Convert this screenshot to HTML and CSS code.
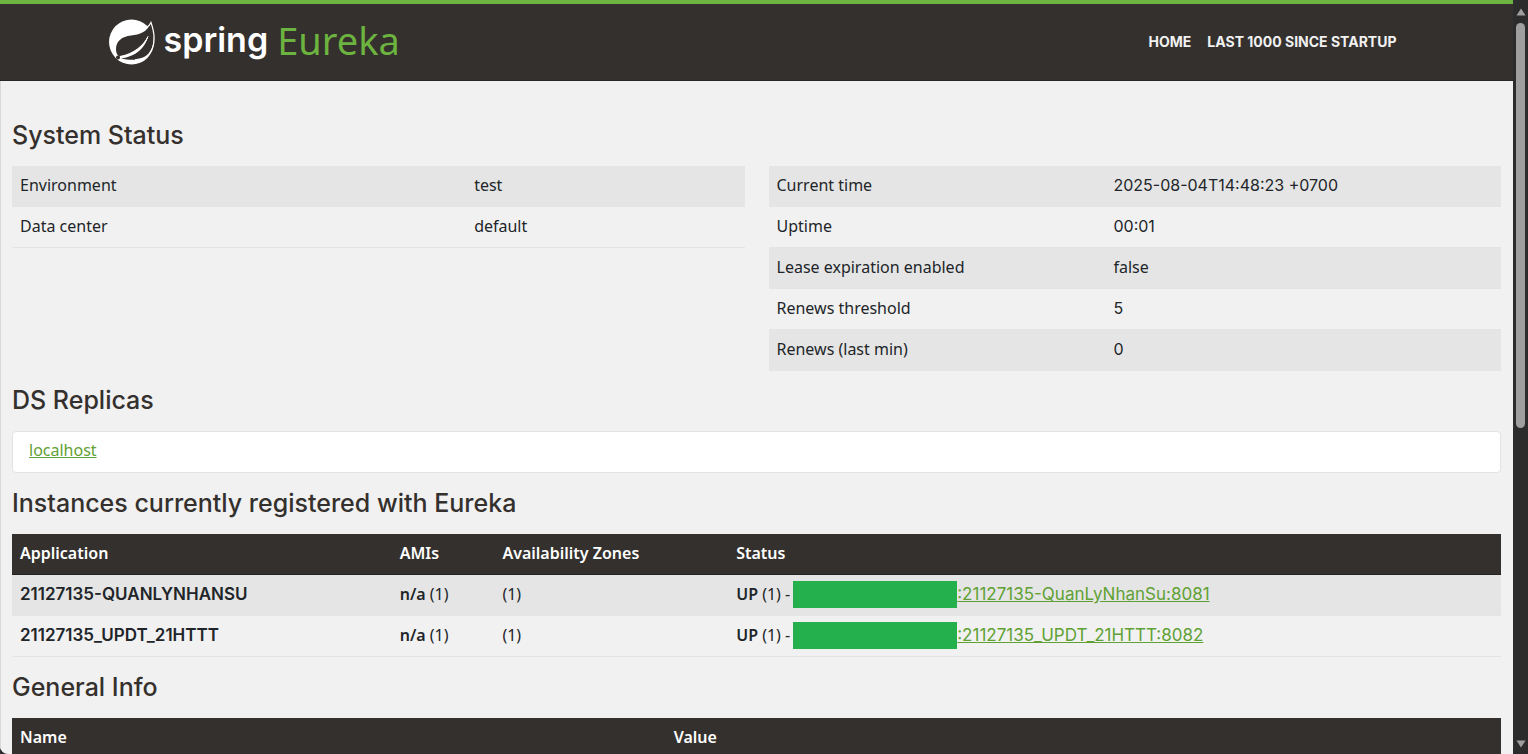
FILE: index.html
```html
<!DOCTYPE html>
<html lang="en">
<head>
<meta charset="utf-8">
<title>Eureka</title>
<link rel="stylesheet" href="styles.css">
</head>
<body>
<div class="page">
  <header class="navbar">
    <div class="container">
      <a class="brand" href="#" aria-label="Spring Eureka">
        <svg class="brand-icon" viewBox="0 0 46 46" aria-hidden="true">
          <circle cx="22.500" cy="23" r="22.500" fill="#fff"/>
          <path d="M42 4C38 13 31 15.500 22 16.500C13 17.500 7 22 7 30C7 34 8 35.500 10 37.500C20 37 33 31 39 17.500C36 29 27 37.500 12 39.500C22 41.500 34 42 40 35C46 27 45.500 15 42 4Z" fill="#34302d"/>
          <path d="M36 10C39 8 41 6 42 3.500C46 15 46.500 27 40 35C37 38.500 32 40.500 26 40.800" fill="none" stroke="#fff" stroke-width="1.200"/>
          <path d="M11 38.500C24 37 34 30 39 17.500C35 26 25 35 11 37.500Z" fill="#fff" stroke="#fff" stroke-width="1"/>
          <circle cx="9" cy="38.500" r="2" fill="#34302d"/>
        </svg>
        <span class="brand-spring">spring</span>
        <span class="brand-eureka">Eureka</span>
      </a>
      <nav class="links">
        <a href="#">HOME</a>
        <a href="#">LAST 1000 SINCE STARTUP</a>
      </nav>
    </div>
  </header>
  <main class="content">
    <h1>System Status</h1>
    <div class="status">
      <table class="left">
        <tbody>
          <tr><td>Environment</td><td>test</td></tr>
          <tr><td>Data center</td><td>default</td></tr>
        </tbody>
      </table>
      <table class="right">
        <tbody>
          <tr><td>Current time</td><td class="data">2025-08-04T14:48:23 +0700</td></tr>
          <tr><td>Uptime</td><td class="data">00:01</td></tr>
          <tr><td>Lease expiration enabled</td><td>false</td></tr>
          <tr><td>Renews threshold</td><td class="data">5</td></tr>
          <tr><td>Renews (last min)</td><td class="data">0</td></tr>
        </tbody>
      </table>
    </div>
    <h1>DS Replicas</h1>
    <ul class="replicas">
      <li><a href="#">localhost</a></li>
    </ul>
    <h1>Instances currently registered with Eureka</h1>
    <table class="instances">
      <thead>
        <tr><th>Application</th><th>AMIs</th><th>Availability Zones</th><th>Status</th></tr>
      </thead>
      <tbody>
        <tr><td class="data name"><b>21127135-QUANLYNHANSU</b></td><td><b>n/a</b> (1)</td><td>(1)</td>
          <td><div class="state"><span><b>UP</b> (1) -</span><span class="mask"></span><a class="data name" href="#">:21127135-QuanLyNhanSu:8081</a></div></td></tr>
        <tr><td class="data name"><b>21127135_UPDT_21HTTT</b></td><td><b>n/a</b> (1)</td><td>(1)</td>
          <td><div class="state"><span><b>UP</b> (1) -</span><span class="mask"></span><a class="data name" href="#">:21127135_UPDT_21HTTT:8082</a></div></td></tr>
      </tbody>
    </table>
    <h1>General Info</h1>
    <table class="general">
      <thead><tr><th>Name</th><th>Value</th></tr></thead>
    </table>
  </main>
</div>
<div class="scrollbar" aria-hidden="true">
  <svg class="arrow" viewBox="0 0 10 8"><path d="M5 0.500L9.500 7.500H0.500Z"/></svg>
  <div class="track"><div class="thumb"></div></div>
  <svg class="arrow" viewBox="0 0 10 8"><path d="M5 7.500L9.500 0.500H0.500Z"/></svg>
</div>
</body>
</html>
```

FILE: styles.css
```css
* { box-sizing: border-box; }
body {
  margin: 0;
  height: 100vh;
  display: flex;
  overflow: hidden;
  background: #2c2c2c;
  color: #212529;
  font: 16px/24px "Noto Sans", sans-serif;
}
.page {
  flex: 1;
  min-width: 0;
  overflow: hidden;
  background: #f1f1f1;
  border-bottom-left-radius: 8px;
}
.navbar {
  background: #34302d;
  border-top: 4px solid #6db33f;
  border-bottom: 1px solid #292522;
}
.container {
  max-width: 1320px;
  margin: 0 auto;
  padding: 0 12px;
  height: 76px;
  display: flex;
  align-items: center;
  justify-content: space-between;
}
.brand {
  display: flex;
  align-items: center;
  text-decoration: none;
}
.brand-icon { width: 46px; height: 46px; margin-right: 9px; }
.brand-spring,
.brand-eureka { padding-bottom: 5px; }
.brand-spring { color: #fff; font: 600 34px/48px Inter, sans-serif; margin-right: 9px; }
.brand-eureka { color: #6db33f; font: 400 38px/48px "Noto Sans", sans-serif; }
.links { display: flex; gap: 16px; padding-right: 8px; }
.links a {
  color: #f1f1f1;
  text-decoration: none;
  font: 700 14px/24px Inter, sans-serif;
}
.content { padding: 39px 12px 0 11px; border-left: 1px solid #d8d8d8; }
h1 {
  margin: 0 0 16px;
  color: #34302d;
  font: 500 25px/30px Inter, sans-serif;
}
table { width: 100%; border-collapse: collapse; table-layout: fixed; }
th, td {
  padding: 7px 8px 9px;
  text-align: left;
  font-weight: 400;
  border-bottom: 1px solid #e3e4e6;
  white-space: nowrap;
}
tbody tr:nth-child(odd) { background: #e5e5e5; }
th {
  color: #fff;
  background: #34302d;
  border-color: #252321;
  font-weight: 600;
}
b { font-weight: 600; }
a { color: #5fa134; }
.data { font-family: Inter, sans-serif; }
.name { font-size: 17px; }
.status {
  display: grid;
  grid-template-columns: 1fr 1fr;
  gap: 24px;
  align-items: start;
  margin-bottom: 14px;
}
.left td:first-child { width: 62%; }
.right td:first-child { width: 46%; }
.replicas {
  list-style: none;
  margin: 0 0 15px;
  padding: 6px 16px 10px;
  background: #fff;
  border: 1px solid #e3e3e3;
  border-radius: 4px;
}
.instances { margin-bottom: 15px; }
.instances th:nth-child(1) { width: 25.5%; }
.instances th:nth-child(2) { width: 6.9%; }
.instances th:nth-child(3) { width: 15.7%; }
.general th:first-child { width: 43.9%; }
.state { display: flex; height: 24px; align-items: center; }
.mask { width: 164px; height: 27px; flex: none; margin-left: 3px; background: #25b04e; }
.scrollbar {
  width: 15px;
  flex: none;
  padding: 8px 0 6px;
  display: flex;
  flex-direction: column;
  align-items: center;
  gap: 7px;
}
.arrow { width: 10px; height: 8px; fill: #9f9f9f; }
.track { flex: 1; width: 9px; }
.thumb { height: 57%; border-radius: 5px; background: #9f9f9f; }
```
